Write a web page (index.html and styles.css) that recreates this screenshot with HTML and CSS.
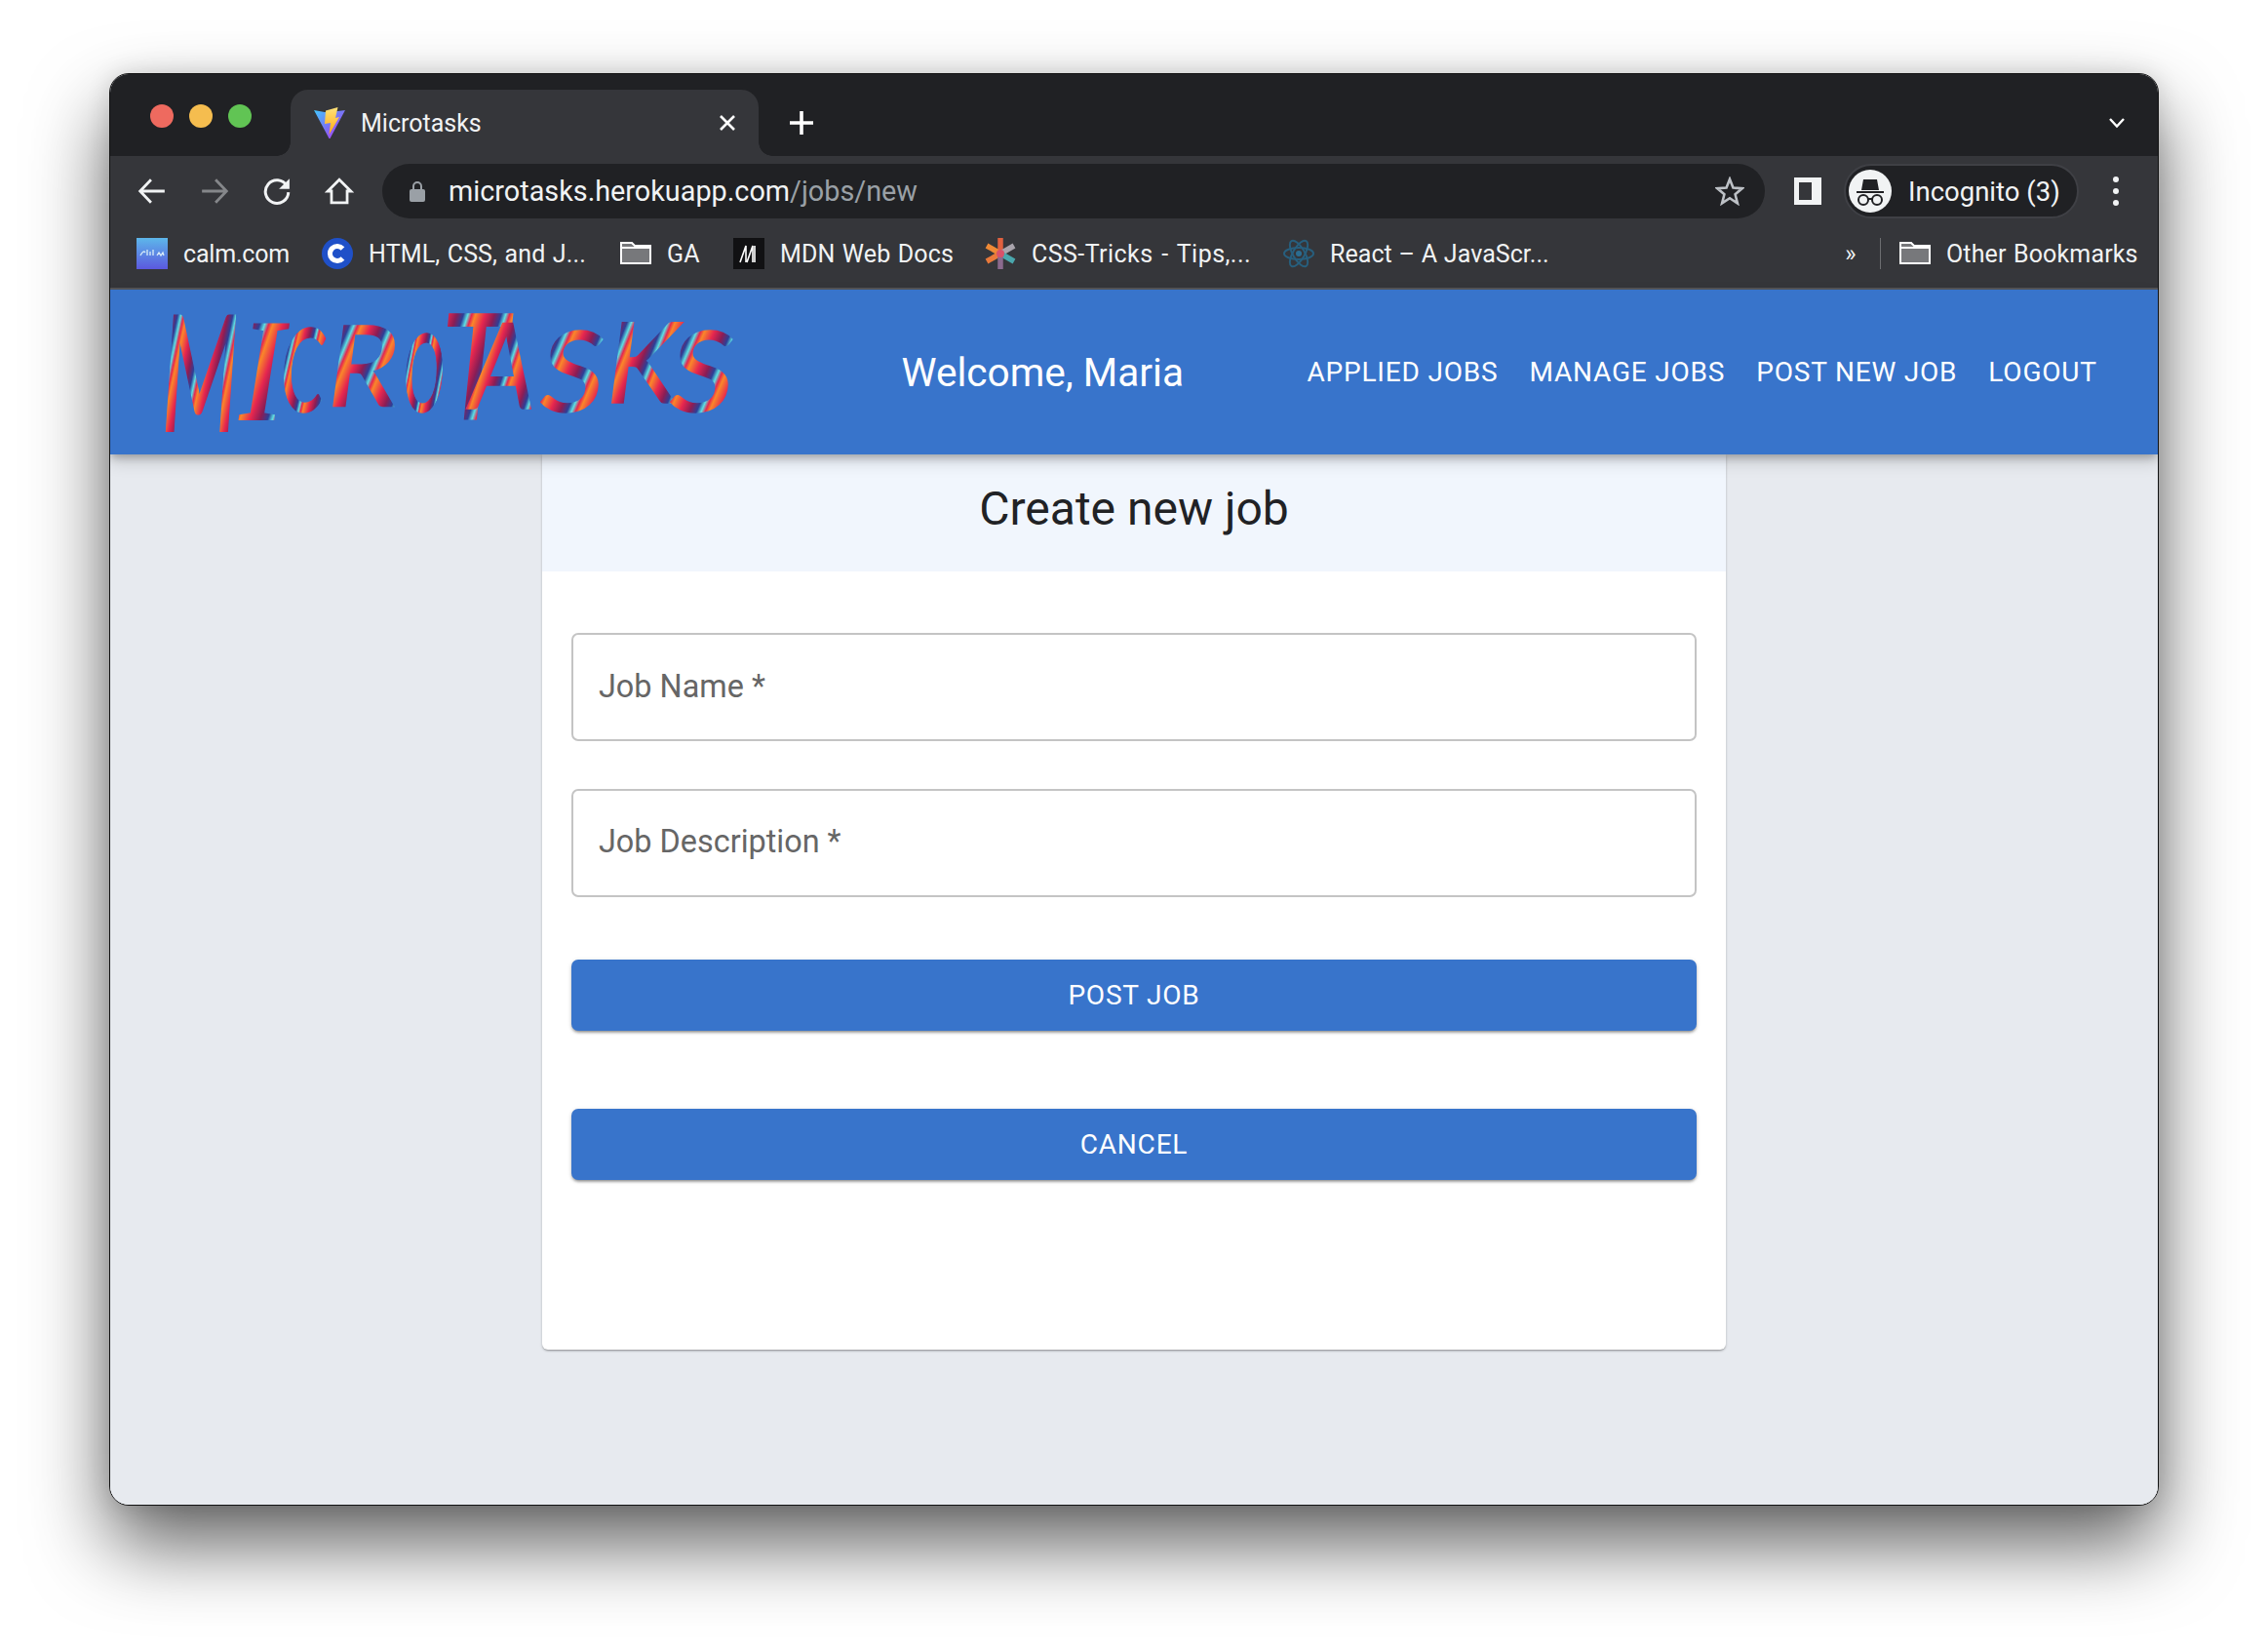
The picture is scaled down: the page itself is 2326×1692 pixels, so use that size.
FILE: index.html
```html
<!DOCTYPE html>
<html lang="en">
<head>
<meta charset="utf-8">
<title>Microtasks</title>
<link rel="stylesheet" href="styles.css">
</head>
<body>
<div class="window">
  <div class="tabstrip">
    <div class="lights"><i class="light red"></i><i class="light yellow"></i><i class="light green"></i></div>
    <div class="tab">
      <svg class="favicon" viewBox="0 0 32 32"><defs><linearGradient id="vt" x1="0" y1="0" x2="1" y2="1"><stop offset="0" stop-color="#41c8ff"/><stop offset=".55" stop-color="#7f6cf5"/><stop offset="1" stop-color="#bd34fe"/></linearGradient><linearGradient id="vb" x1="0" y1="0" x2="0" y2="1"><stop offset="0" stop-color="#ffe27a"/><stop offset="1" stop-color="#ffaa10"/></linearGradient></defs><path d="M0 3 L11 5 L17 5 L32 3 L16.500 32 Q16 33 15.500 32 Z" fill="url(#vt)"/><path d="M12 3.500 L24.500 0 L22 11 L26 10 L15.500 28 L17 16 L11 17 Z" fill="url(#vb)"/></svg>
      <span class="tab-title">Microtasks</span>
      <svg class="tab-close" viewBox="0 0 18 18"><path d="M2 2 L16 16 M16 2 L2 16" stroke="#fff" stroke-width="2.600" fill="none"/></svg>
    </div>
    <svg class="new-tab" viewBox="0 0 24 24"><path d="M12 0 V24 M0 12 H24" stroke="#fff" stroke-width="3.600" fill="none"/></svg>
    <svg class="tab-chevron" viewBox="0 0 18 12"><path d="M2 2 L9 9.500 L16 2" stroke="#fff" stroke-width="2.400" fill="none"/></svg>
  </div>

  <div class="toolbar">
    <span class="tool"><svg viewBox="0 0 28 28"><path d="M26 14 H3 M13 3 L2.500 14 L13 25" stroke="#f1f3f4" stroke-width="2.600" fill="none"/></svg></span>
    <span class="tool"><svg viewBox="0 0 28 28"><path d="M2 14 H25 M15 3 L25.500 14 L15 25" stroke="#85878a" stroke-width="2.600" fill="none"/></svg></span>
    <span class="tool"><svg viewBox="0 0 28 28"><path d="M23.500 9 A11 11 0 1 0 25 15" stroke="#f1f3f4" stroke-width="2.800" fill="none"/><path d="M26 2 V12 H16 Z" fill="#f1f3f4"/></svg></span>
    <span class="tool"><svg viewBox="0 0 28 28"><path d="M14 3 L25 14 H21.500 V25 H6.500 V14 H3 Z" stroke="#f1f3f4" stroke-width="2.600" fill="none"/></svg></span>
    <div class="omnibox">
      <svg class="lock" viewBox="0 0 16 22"><path d="M4 10 V6 A4 4 0 0 1 12 6 V10" stroke="#9aa0a6" stroke-width="2" fill="none"/><rect x="0" y="9" width="16" height="13" rx="2" fill="#9aa0a6"/></svg>
      <span class="url">microtasks.herokuapp.com<span class="url-path">/jobs/new</span></span>
      <svg class="star" viewBox="0 0 28 28"><path d="M14 2.500 L17.200 10.800 L26 11.300 L19.200 17 L21.400 25.600 L14 20.800 L6.600 25.600 L8.800 17 L2 11.300 L10.800 10.800 Z" stroke="#bdc1c6" stroke-width="2.400" fill="none"/></svg>
    </div>
    <span class="panel-icon"></span>
    <div class="profile">
      <span class="avatar"><svg viewBox="0 0 44 44"><path d="M15 10 H29 L31 21 H13 Z M8 22 H36 V24 H8 Z" fill="#202124"/><circle cx="15" cy="31" r="5" stroke="#202124" stroke-width="2" fill="none"/><circle cx="29" cy="31" r="5" stroke="#202124" stroke-width="2" fill="none"/><path d="M20 30 H24" stroke="#202124" stroke-width="2"/></svg></span>
      <span class="profile-name">Incognito (3)</span>
    </div>
    <svg class="kebab" viewBox="0 0 8 32"><circle cx="4" cy="4" r="3" fill="#f1f3f4"/><circle cx="4" cy="16" r="3" fill="#f1f3f4"/><circle cx="4" cy="28" r="3" fill="#f1f3f4"/></svg>
  </div>

  <div class="bookmarks">
    <div class="bm bm-calm"><svg class="ico" viewBox="0 0 32 32"><defs><linearGradient id="calm" x1="0" y1="0" x2="0" y2="1"><stop offset="0" stop-color="#5db7ea"/><stop offset="1" stop-color="#5b58de"/></linearGradient></defs><rect width="32" height="32" fill="url(#calm)"/><path d="M4 18 Q7 12 9 15 M11 18 V12 M14 18 V14 M17 18 V12 M21 18 L23 15 L25 18 L27 15 L28 18" stroke="#d9ecf8" stroke-width="1.300" fill="none"/></svg><span>calm.com</span></div>
    <div class="bm bm-html"><svg class="ico" viewBox="0 0 32 32"><circle cx="16" cy="16" r="16" fill="#1f50c8"/><path d="M21.500 11 A7.500 7.500 0 1 0 21.500 21" stroke="#fff" stroke-width="5" fill="none"/></svg><span>HTML, CSS, and J...</span></div>
    <div class="bm bm-ga"><svg class="ico" viewBox="0 0 32 32"><path d="M1 26 V5 H12 L15 8 H31 V26 Z" fill="#77787b" stroke="#fff" stroke-width="2"/><path d="M1 10 H31" stroke="#fff" stroke-width="2"/></svg><span>GA</span></div>
    <div class="bm bm-mdn"><svg class="ico" viewBox="0 0 32 32"><rect width="32" height="32" fill="#111113"/><path d="M7 25 L13 8 V25 M14 25 L20 8 V25 M22 8 V25" stroke="#fff" stroke-width="1.600" fill="none"/></svg><span>MDN Web Docs</span></div>
    <div class="bm bm-css"><svg class="ico" viewBox="0 0 32 32"><g stroke-width="5.500"><path d="M16 16 L16 0" stroke="#e0613f"/><path d="M16 16 L2 8" stroke="#ef8a36"/><path d="M16 16 L30 8" stroke="#a9a4ac"/><path d="M16 16 L2 24" stroke="#e9793b"/><path d="M16 16 L30 24" stroke="#4aa7ad"/><path d="M16 16 L16 32" stroke="#8b6a8e"/><circle cx="16" cy="16" r="4" fill="#d9526a" stroke="none"/></g></svg><span>CSS-Tricks - Tips,...</span></div>
    <div class="bm bm-react"><svg class="ico" viewBox="0 0 32 32"><g stroke="#275f7e" stroke-width="2" fill="none"><ellipse cx="16" cy="16" rx="15" ry="6"/><ellipse cx="16" cy="16" rx="15" ry="6" transform="rotate(60 16 16)"/><ellipse cx="16" cy="16" rx="15" ry="6" transform="rotate(120 16 16)"/></g><circle cx="16" cy="16" r="3" fill="#2b6d91"/></svg><span>React – A JavaScr...</span></div>
    <span class="bm-more">»</span>
    <span class="bm-sep"></span>
    <div class="bm"><svg class="ico" viewBox="0 0 32 32"><path d="M1 26 V5 H12 L15 8 H31 V26 Z" fill="#77787b" stroke="#fff" stroke-width="2"/><path d="M1 10 H31" stroke="#fff" stroke-width="2"/></svg><span>Other Bookmarks</span></div>
  </div>

  <main class="page">
    <header class="appbar">
      <svg class="logo" viewBox="0 0 600 130" role="img" aria-label="Microtasks">
        <defs>
          <linearGradient id="brush" gradientUnits="userSpaceOnUse" x1="0" y1="0" x2="26" y2="10" spreadMethod="repeat">
            <stop offset="0" stop-color="#f9872a"/>
            <stop offset=".25" stop-color="#e6264f"/>
            <stop offset=".5" stop-color="#8a1d55"/>
            <stop offset=".68" stop-color="#2d3f98"/>
            <stop offset=".8" stop-color="#5be0e4"/>
            <stop offset=".9" stop-color="#e6264f"/>
            <stop offset="1" stop-color="#f9872a"/>
          </linearGradient>
        </defs>
        <g class="logo-text">
          <text transform="translate(2 125) scale(.95 1.720)">M</text>
          <text class="logo-serif" transform="translate(82 113) scale(1.400 1.550)">I</text>
          <text transform="translate(124 105) scale(.75 1.230)">C</text>
          <text transform="translate(172 100) scale(1.300 1.200)">R</text>
          <text transform="translate(250 105) scale(.58 1.150)">O</text>
          <text transform="translate(289 113) scale(1.300 1.550)">T</text>
          <text transform="translate(318 102) scale(1.100 1.280)">A</text>
          <text transform="translate(390 105) scale(1.350 1.200)">S</text>
          <text transform="translate(458 96) scale(1.250 1.200)">K</text>
          <text transform="translate(523 105) scale(1.350 1.200)">S</text>
        </g>
      </svg>
      <span class="welcome">Welcome, Maria</span>
      <nav class="nav">
        <a class="nav-link">APPLIED JOBS</a>
        <a class="nav-link">MANAGE JOBS</a>
        <a class="nav-link">POST NEW JOB</a>
        <a class="nav-link">LOGOUT</a>
      </nav>
    </header>
    <section class="card">
      <h1 class="card-title">Create new job</h1>
      <form class="form">
        <div class="field">Job Name *</div>
        <div class="field">Job Description *</div>
        <button type="button" class="btn btn-post">POST JOB</button>
        <button type="button" class="btn btn-cancel">CANCEL</button>
      </form>
    </section>
  </main>
</div>
</body>
</html>
```
FILE: styles.css
```css
* { box-sizing: border-box; }
html, body { margin: 0; padding: 0; }
body {
  width: 2326px;
  height: 1692px;
  background: #fff;
  overflow: hidden;
  padding-top: 75px;
  font-family: Roboto, "Liberation Sans", sans-serif;
}
.window {
  width: 2102px;
  height: 1469px;
  margin: 0 auto;
  border: 1px solid #111;
  border-radius: 20px;
  overflow: hidden;
  display: flex;
  flex-direction: column;
  background: #e7eaef;
  box-shadow: 0 40px 80px rgba(0,0,0,.62), 0 0 24px rgba(0,0,0,.12);
}

.tabstrip {
  height: 84px;
  flex: none;
  background: #202124;
  display: flex;
  align-items: flex-start;
  padding-left: 41px;
}
.lights { display: flex; gap: 16px; margin-top: 31px; width: 144px; flex: none; }
.light { width: 24px; height: 24px; border-radius: 50%; display: block; }
.red { background: #ee6a5f; }
.yellow { background: #f5bd4f; }
.green { background: #61c454; }
.tab {
  width: 480px;
  height: 68px;
  margin-top: 16px;
  background: #35363a;
  border-radius: 18px 18px 0 0;
  display: flex;
  align-items: center;
  padding: 0 24px;
  flex: none;
  position: relative;
}
.tab::before,
.tab::after {
  content: "";
  position: absolute;
  bottom: 0;
  width: 14px;
  height: 14px;
}
.tab::before { left: -14px; background: radial-gradient(circle at 0 0, #202124 13.5px, #35363a 14px); }
.tab::after { right: -14px; background: radial-gradient(circle at 100% 0, #202124 13.5px, #35363a 14px); }
.favicon { width: 32px; height: 32px; margin-right: 16px; flex: none; }
.tab-title { font-size: 25px; color: #f1f3f4; flex: 1; }
.tab-close { width: 18px; height: 18px; margin-right: -1px; }
.new-tab { width: 24px; height: 24px; margin: 38px 0 0 32px; flex: none; }
.tab-chevron { width: 18px; height: 12px; margin: 44px 33px 0 auto; flex: none; }

.toolbar {
  height: 72px;
  flex: none;
  background: #35363a;
  display: flex;
  align-items: center;
  padding: 0 0 0 11px;
}
.tool { width: 64px; height: 64px; display: flex; align-items: center; justify-content: center; flex: none; }
.tool svg { width: 30px; height: 30px; }
.omnibox {
  width: 1418px;
  height: 56px;
  margin-left: 12px;
  border-radius: 28px;
  background: #202124;
  display: flex;
  align-items: center;
  padding: 0 21px 0 28px;
  flex: none;
}
.lock { width: 16px; height: 22px; margin-right: 24px; flex: none; }
.url { font-size: 28.8px; color: #f1f3f4; flex: 1; }
.url-path { color: #9aa0a6; }
.star { width: 30px; height: 30px; flex: none; }
.panel-icon {
  width: 28px;
  height: 28px;
  margin-left: 30px;
  border: 5px solid #f1f3f4;
  border-right-width: 10px;
  flex: none;
}
.profile {
  width: 241px;
  height: 56px;
  margin-left: 23px;
  border-radius: 28px;
  border: 2px solid #3f4045;
  background: #202124;
  display: flex;
  align-items: center;
  padding-left: 3px;
  flex: none;
}
.avatar { width: 44px; height: 44px; border-radius: 50%; background: #f1f3f4; flex: none; }
.avatar svg { width: 44px; height: 44px; display: block; }
.profile-name { font-size: 27.5px; color: #f1f3f4; margin-left: 17px; white-space: nowrap; }
.kebab { width: 8px; height: 32px; margin-left: 34px; flex: none; }

.bookmarks {
  height: 65px;
  flex: none;
  background: #35363a;
  border-bottom: 2px solid #55565a;
  display: flex;
  align-items: center;
  padding: 0 0 7px 27px;
  font-size: 25px;
  letter-spacing: .15px;
  word-spacing: 1px;
  color: #f1f3f4;
  white-space: nowrap;
}
.bm { display: flex; align-items: center; flex: none; }
.ico { width: 32px; height: 32px; margin-right: 16px; flex: none; }
.bm-calm { width: 190px; letter-spacing: -.2px; }
.bm-html { width: 306px; }
.bm-ga { width: 116px; }
.bm-mdn { width: 258px; }
.bm-css { width: 306px; letter-spacing: .45px; word-spacing: 2px; }
.bm-react { width: 567px; letter-spacing: .05px; word-spacing: .5px; }
.bm-more { width: 30px; text-align: center; font-size: 24px; margin-right: 15px; flex: none; }
.bm-sep { width: 1px; height: 32px; background: #6c6d70; margin-right: 19px; flex: none; }

.page {
  flex: 1;
  background: #e7eaef;
  display: flex;
  flex-direction: column;
  align-items: center;
}
.appbar {
  width: 100%;
  height: 169px;
  flex: none;
  background: #3874cb;
  color: #fff;
  display: flex;
  align-items: center;
  padding-left: 51px;
  box-shadow: 0 4px 8px -1px rgba(0,0,0,.25), 0 8px 16px rgba(0,0,0,.14);
  position: relative;
  z-index: 2;
}
.logo { width: 600px; height: 130px; flex: none; overflow: visible; }
.logo-text {
  font-family: Lato, "Liberation Sans", sans-serif;
  font-style: italic;
  font-size: 96px;
  fill: url(#brush);
  stroke: url(#brush);
  stroke-width: 1.2px;
}
.logo-text .logo-serif { font-family: "Liberation Serif", serif; }
.welcome { font-size: 40.6px; margin-left: 160.5px; white-space: nowrap; flex: none; }
.nav { display: flex; gap: 32px; margin-left: 126.5px; flex: none; }
.nav-link { font-size: 28px; letter-spacing: .8px; white-space: nowrap; }

.card {
  width: 1214px;
  height: 918px;
  flex: none;
  background: #fff;
  border-radius: 0 0 6px 6px;
  box-shadow: 0 2px 2px -1px rgba(0,0,0,.25), 0 1px 3px rgba(0,0,0,.2);
}
.card-title {
  margin: 0;
  height: 120px;
  background: #f1f6fd;
  color: #212225;
  font-size: 48px;
  font-weight: 400;
  display: flex;
  align-items: center;
  justify-content: center;
  padding-bottom: 10px;
}
.form { display: flex; flex-direction: column; padding: 63px 30px 0; }
.field {
  height: 111px;
  border: 2px solid #c4c4c4;
  border-radius: 7px;
  margin-bottom: 48.5px;
  padding: 0 0 2px 26px;
  display: flex;
  align-items: center;
  font-size: 32.4px;
  color: #666;
}
.btn {
  height: 73px;
  border: 0;
  border-radius: 7px;
  background: #3874cb;
  color: #fff;
  font-family: inherit;
  font-size: 28px;
  letter-spacing: .8px;
  box-shadow: 0 3px 3px -2px rgba(0,0,0,.3), 0 2px 3px rgba(0,0,0,.18), 0 1px 5px rgba(0,0,0,.12);
}
.btn-post { margin-top: 16px; margin-bottom: 80px; }
```
